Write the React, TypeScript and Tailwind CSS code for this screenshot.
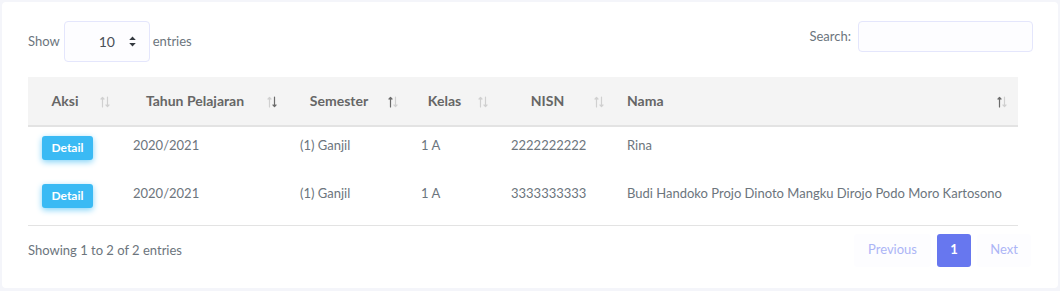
import React from "react";

type Sort = "none" | "asc" | "desc";

const columns: { label: string; width: string; sort: Sort; align: "center" | "left" }[] = [
  { label: "Aksi", width: "w-[93px]", sort: "none", align: "center" },
  { label: "Tahun Pelajaran", width: "w-[167px]", sort: "desc", align: "center" },
  { label: "Semester", width: "w-[121px]", sort: "asc", align: "center" },
  { label: "Kelas", width: "w-[90px]", sort: "none", align: "center" },
  { label: "NISN", width: "w-[116px]", sort: "none", align: "center" },
  { label: "Nama", width: "w-[403px]", sort: "asc", align: "left" },
];

const rows = [
  { tahun: "2020/2021", semester: "(1) Ganjil", kelas: "1 A", nisn: "2222222222", nama: "Rina" },
  {
    tahun: "2020/2021",
    semester: "(1) Ganjil",
    kelas: "1 A",
    nisn: "3333333333",
    nama: "Budi Handoko Projo Dinoto Mangku Dirojo Podo Moro Kartosono",
  },
];

function SortIcon({ sort }: { sort: Sort }) {
  const up = sort === "asc" ? "#6b6b6b" : "#d0d0d0";
  const down = sort === "desc" ? "#6b6b6b" : "#d0d0d0";
  return (
    <svg width="10" height="12" viewBox="0 0 10 12" className="shrink-0 mt-[3px]">
      <g fill="none" strokeWidth="1.2" strokeLinecap="round" strokeLinejoin="round">
        <path d="M2.5 11V1.5M1 3L2.5 1.5L4 3" stroke={up} />
        <path d="M7.5 1V10.5M6 9L7.5 10.5L9 9" stroke={down} />
      </g>
    </svg>
  );
}

export default function App() {
  return (
    <div className="bg-[#f4f5fa] p-[2px] min-h-[291px] font-['Lato','Noto_Sans',sans-serif]">
      <div className="bg-white rounded-[4px] h-[286px] pt-[19px] pl-[26px] pr-[25px] pb-[21px] text-[13px] text-[#6c757d]">
        {/* Top controls */}
        <div className="flex justify-between items-start">
          <div className="flex items-center">
            <span className="mr-[4px] text-[13px]">Show</span>
            <div className="w-[86px] h-[41px] border border-[#e4e6fc] bg-[#fdfdff] rounded-[4px] flex items-center pl-[34px] pr-[13px] text-[#495057] text-[14px]">
              <span className="flex-1">10</span>
              <svg width="7" height="11" viewBox="0 0 7 11">
                <path d="M3.5 0.5L6.8 4H0.2Z M3.5 10.5L0.2 7H6.8Z" fill="#343a40" />
              </svg>
            </div>
            <span className="ml-[3px] text-[13px]">entries</span>
          </div>
          <div className="flex items-center">
            <span className="mr-[7px] text-[13px]">Search:</span>
            <input className="w-[175px] h-[31px] border border-[#e4e6fc] bg-[#fdfdff] rounded-[4px] outline-none" />
          </div>
        </div>

        {/* Table */}
        <table className="mt-[15px] w-[990px] table-fixed border-collapse">
          <colgroup>
            {columns.map((c) => (
              <col key={c.label} className={c.width} />
            ))}
          </colgroup>
          <thead>
            <tr className="bg-[#f4f4f4]">
              {columns.map((c) => (
                <th key={c.label} className="h-[49px] pl-3 pr-[11px] pb-[2px] border-b-2 border-[#e3e3e3] font-bold text-[#666] text-[14px]">
                  <div className="flex items-center">
                    <span className={c.align === "center" ? "flex-1 text-center" : "flex-1 text-left"}>{c.label}</span>
                    <span className="ml-[10px] flex">
                      <SortIcon sort={c.sort} />
                    </span>
                  </div>
                </th>
              ))}
            </tr>
          </thead>
          <tbody>
            {rows.map((r, i) => (
              <tr key={i} className={i === rows.length - 1 ? "border-b border-[#e3e3e3]" : ""}>
                <td className={(i === rows.length - 1 ? "h-[50px]" : "h-[49px]") + " align-top pt-[9px] pl-[14px]"}>
                  <button className="h-[24px] w-[51px] rounded-[3px] bg-[#3abaf4] text-white text-[12px] font-bold shadow-[0_2px_6px_#82d3f8]">
                    Detail
                  </button>
                </td>
                <td className="align-top pt-[10px] pl-3 leading-4">{r.tahun}</td>
                <td className="align-top pt-[10px] pl-3 leading-4">{r.semester}</td>
                <td className="align-top pt-[10px] pl-3 leading-4">{r.kelas}</td>
                <td className="align-top pt-[10px] pl-3 leading-4">{r.nisn}</td>
                <td className="align-top pt-[10px] pl-3 leading-4 whitespace-nowrap">{r.nama}</td>
              </tr>
            ))}
          </tbody>
        </table>

        {/* Footer */}
        <div className="mt-[8px] flex items-center justify-between pr-[2px]">
          <span className="mt-[2px] text-[13px]">Showing 1 to 2 of 2 entries</span>
          <div className="flex items-center gap-[6px]">
            <span className="h-[33px] w-[77px] flex items-center justify-center rounded-[3px] bg-[#fdfdff] text-[#acb5f6] text-[13px]">
              Previous
            </span>
            <span className="h-[33px] w-[34px] flex items-center justify-center rounded-[3px] bg-[#6777ef] text-white font-bold text-[13px]">
              1
            </span>
            <span className="h-[33px] w-[54px] flex items-center justify-center rounded-[3px] bg-[#fdfdff] text-[#acb5f6] text-[13px]">
              Next
            </span>
          </div>
        </div>
      </div>
    </div>
  );
}
